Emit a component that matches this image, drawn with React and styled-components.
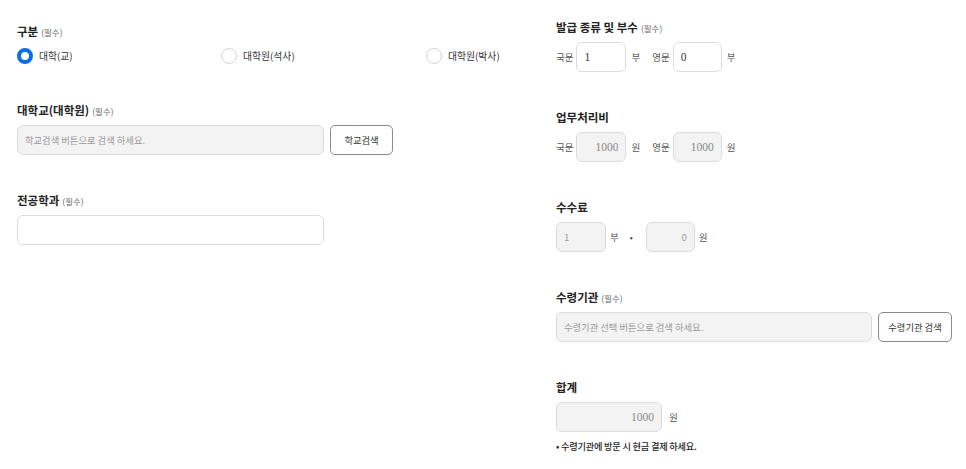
import React from "react";
import styled, { createGlobalStyle } from "styled-components";

const GlobalStyle = createGlobalStyle`
  html, body { margin: 0; padding: 0; background: #fff; }
  body { font-family: "Noto Sans CJK KR", "Noto Sans", sans-serif; color: #222; }
  * { box-sizing: border-box; }
`;

const Page = styled.div`
  display: flex;
  padding-left: 17px;
  width: 966px;
  height: 469px;
  overflow: hidden;
`;

const Column = styled.div`
  width: ${(p) => p.$width}px;
  padding-top: ${(p) => p.$top}px;
  display: flex;
  flex-direction: column;
  gap: 35px;
`;

const Field = styled.div`
  display: flex;
  flex-direction: column;
`;

const Title = styled.div`
  height: 20px;
  line-height: 20px;
  font-size: 11.5px;
  font-weight: 700;
  color: #222;
  margin-bottom: 5px;
  white-space: nowrap;
`;

const Required = styled.span`
  font-size: 8.5px;
  font-weight: 400;
  color: #666;
  margin-left: 3px;
`;

const RadioGroup = styled.div`
  display: grid;
  grid-template-columns: 204px 205px auto;
  height: 19px;
  align-items: center;
`;

const RadioLabel = styled.label`
  display: flex;
  align-items: center;
  gap: 6px;
  font-size: 9.8px;
  color: #333;
`;

const RadioDot = styled.span`
  width: 16px;
  height: 16px;
  border-radius: 50%;
  border: ${(p) => (p.$checked ? "4px solid #0a6de6" : "1px solid #d2d2d2")};
  background: #fff;
  flex: none;
`;

const Row = styled.div`
  display: flex;
  align-items: center;
  gap: ${(p) => p.$gap ?? 6}px;
  height: 30px;
`;

const TextBox = styled.input`
  width: ${(p) => p.$w}px;
  height: 30px;
  border: 1px solid #dcdcdc;
  border-radius: 6px;
  background: ${(p) => (p.$disabled ? "#f3f3f4" : "#fff")};
  padding: 0 7px;
  font-family: ${(p) =>
    p.$serif ? '"Liberation Serif", "DejaVu Serif", serif' : '"Noto Sans CJK KR", sans-serif'};
  font-size: ${(p) => (p.$serif ? 11.5 : 9.5)}px;
  color: ${(p) => p.$color ?? "#333"};
  text-align: ${(p) => (p.$right ? "right" : "left")};
  outline: none;
  flex: none;
  &::placeholder { color: #999; font-size: 9.3px; }
`;

const Button = styled.button`
  height: 30px;
  width: ${(p) => p.$w}px;
  border: 1px solid #8a8a8a;
  border-radius: 5px;
  background: #fff;
  font-family: "Noto Sans CJK KR", sans-serif;
  font-size: 9.3px;
  color: #333;
  padding: 0;
  flex: none;
`;

const SmallLabel = styled.span`
  font-size: 9.5px;
  color: #555;
  margin-left: ${(p) => p.$ml ?? 0}px;
  margin-right: ${(p) => p.$mr ?? 0}px;
  white-space: nowrap;
`;

const Dot = styled.span`
  font-size: 9px;
  color: #555;
  margin: 0 9px 0 7px;
`;

const Note = styled.div`
  margin-top: 7px;
  font-size: 9.2px;
  font-weight: 500;
  color: #222;
  letter-spacing: -0.2px;
`;

function Radio({ checked, children }) {
  return (
    <RadioLabel>
      <RadioDot $checked={checked} />
      {children}
    </RadioLabel>
  );
}

export default function App() {
  return (
    <>
      <GlobalStyle />
      <Page>
        <Column $width={539} $top={21}>
          <Field>
            <Title>
              구분<Required>(필수)</Required>
            </Title>
            <RadioGroup>
              <Radio checked>대학(교)</Radio>
              <Radio>대학원(석사)</Radio>
              <Radio>대학원(박사)</Radio>
            </RadioGroup>
          </Field>
          <Field>
            <Title>
              대학교(대학원)<Required>(필수)</Required>
            </Title>
            <Row>
              <TextBox $w={307} $disabled readOnly placeholder="학교검색 버튼으로 검색 하세요." />
              <Button $w={63}>학교검색</Button>
            </Row>
          </Field>
          <Field>
            <Title>
              전공학과<Required>(필수)</Required>
            </Title>
            <Row>
              <TextBox $w={307} />
            </Row>
          </Field>
        </Column>

        <Column $width={395} $top={17}>
          <Field>
            <Title>
              발급 종류 및 부수<Required>(필수)</Required>
            </Title>
            <Row $gap={3}>
              <SmallLabel>국문</SmallLabel>
              <TextBox $w={50} $serif defaultValue="1" />
              <SmallLabel $ml={2} $mr={9}>부</SmallLabel>
              <SmallLabel>영문</SmallLabel>
              <TextBox $w={49} $serif defaultValue="0" />
              <SmallLabel $ml={2}>부</SmallLabel>
            </Row>
          </Field>
          <Field>
            <Title>업무처리비</Title>
            <Row $gap={3}>
              <SmallLabel>국문</SmallLabel>
              <TextBox $w={50} $serif $disabled $right $color="#888" readOnly defaultValue="1000" />
              <SmallLabel $ml={2} $mr={9}>원</SmallLabel>
              <SmallLabel>영문</SmallLabel>
              <TextBox $w={49} $serif $disabled $right $color="#888" readOnly defaultValue="1000" />
              <SmallLabel $ml={2}>원</SmallLabel>
            </Row>
          </Field>
          <Field>
            <Title>수수료</Title>
            <Row $gap={4}>
              <TextBox $w={50} $disabled $color="#999" readOnly defaultValue="1" />
              <SmallLabel>부</SmallLabel>
              <Dot>•</Dot>
              <TextBox $w={49} $disabled $right $color="#999" readOnly defaultValue="0" />
              <SmallLabel>원</SmallLabel>
            </Row>
          </Field>
          <Field>
            <Title>
              수령기관<Required>(필수)</Required>
            </Title>
            <Row>
              <TextBox $w={316} $disabled readOnly placeholder="수령기관 선택 버튼으로 검색 하세요." />
              <Button $w={74}>수령기관 검색</Button>
            </Row>
          </Field>
          <Field>
            <Title>합계</Title>
            <Row $gap={7}>
              <TextBox $w={106} $serif $disabled $right $color="#888" readOnly defaultValue="1000" />
              <SmallLabel>원</SmallLabel>
            </Row>
            <Note>• 수령기관에 방문 시 현금 결제 하세요.</Note>
          </Field>
        </Column>
      </Page>
    </>
  );
}
